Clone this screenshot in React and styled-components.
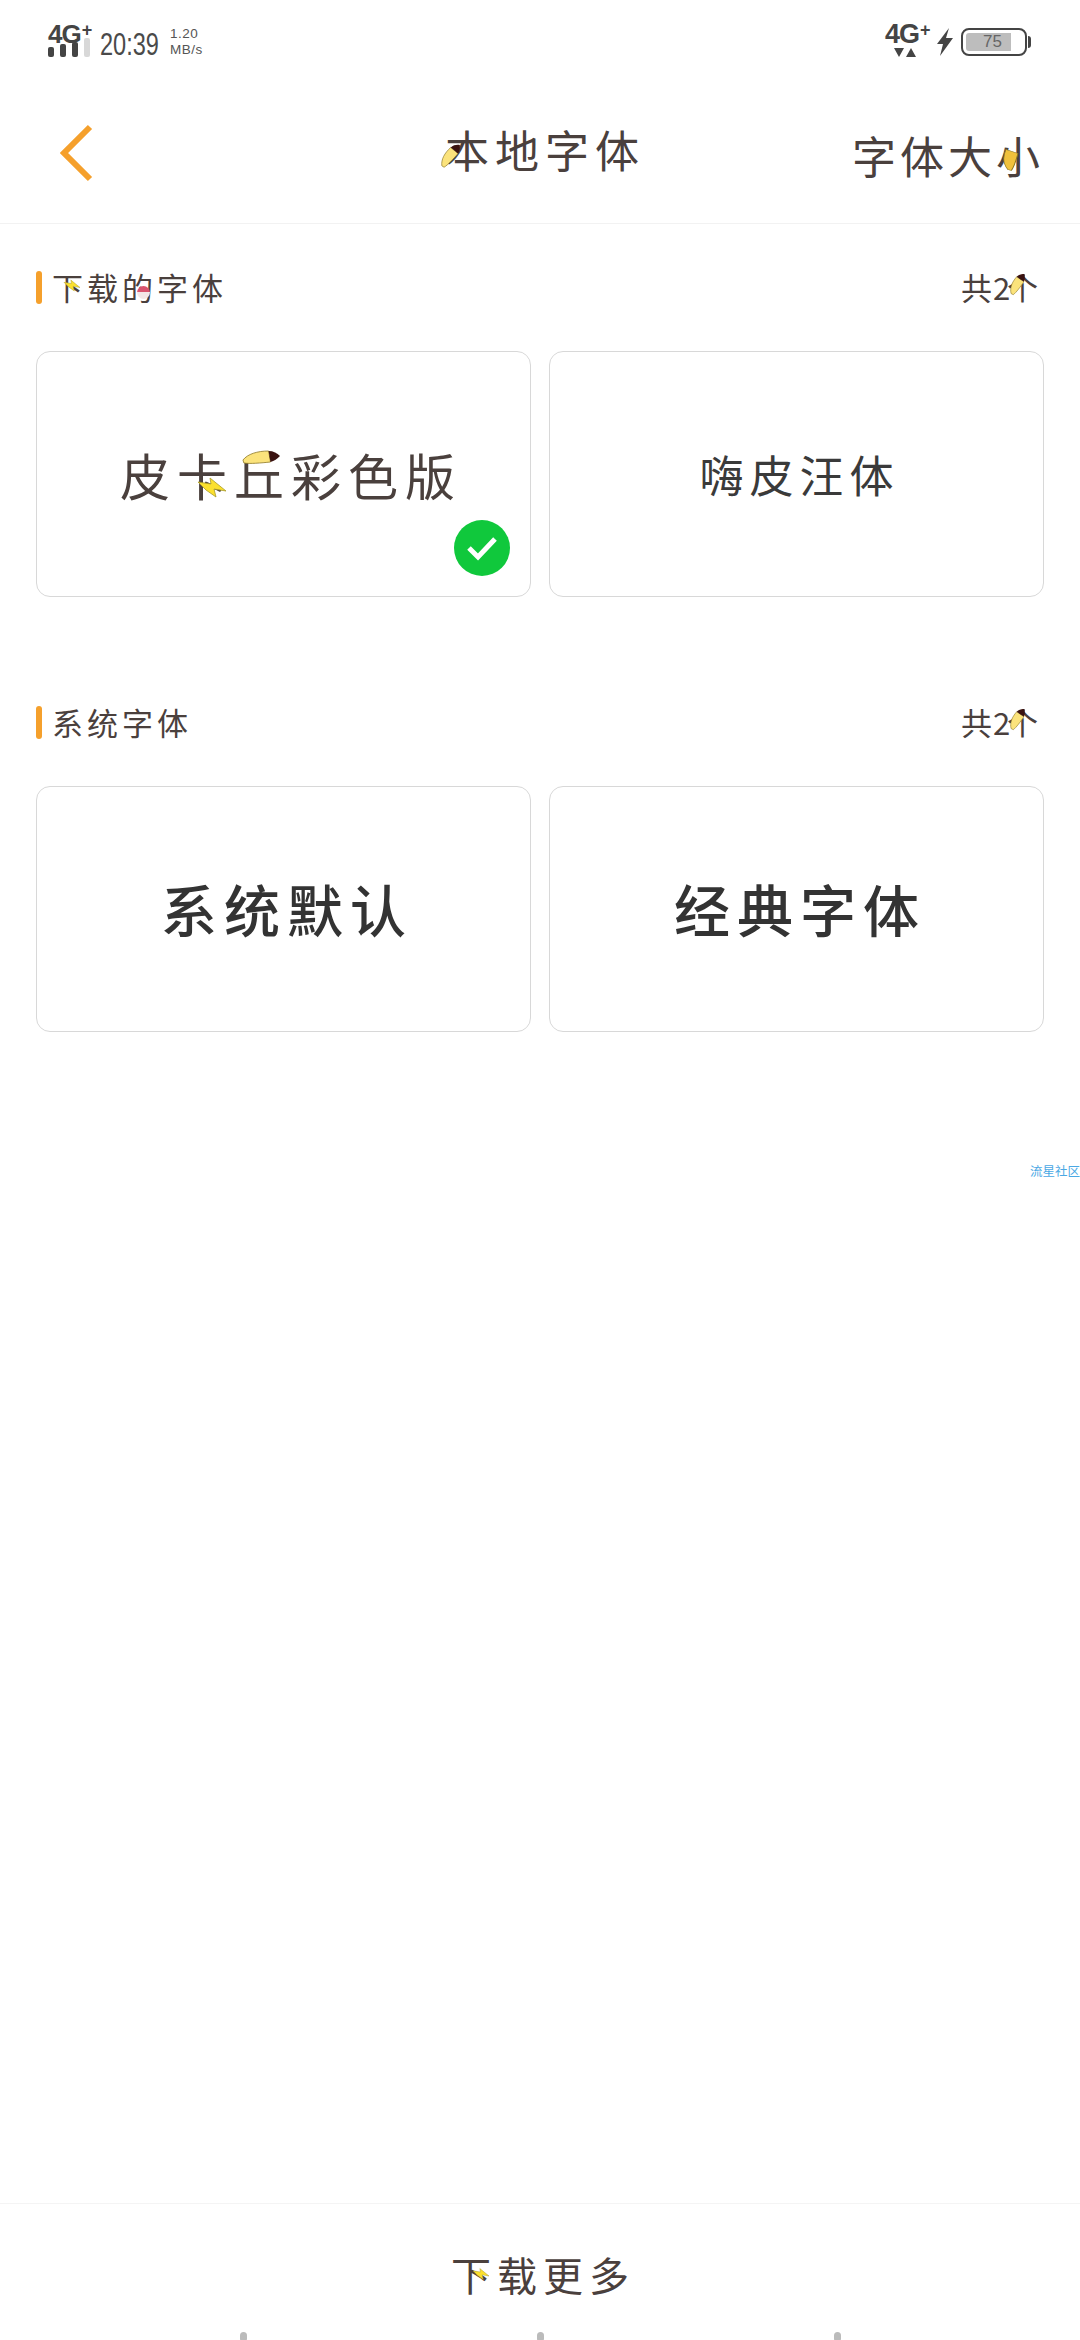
import React from 'react';
import styled, { createGlobalStyle } from 'styled-components';

const GlobalStyle = createGlobalStyle`
  * {
    box-sizing: border-box;
  }
  html, body {
    margin: 0;
    padding: 0;
    background: #fff;
  }
  body {
    font-family: "Noto Sans CJK SC", "Noto Sans", sans-serif;
  }
`;

const HAND = '#4a403d';

const Page = styled.div`
  position: relative;
  width: 1080px;
  height: 2340px;
  overflow: hidden;
  display: flex;
  flex-direction: column;
  background: #fff;
`;

/* status bar */
const StatusBar = styled.div`
  height: 80px;
  padding: 22px 53px 0 48px;
  display: flex;
  justify-content: space-between;
  align-items: flex-start;
`;

const StatusGroup = styled.div`
  display: flex;
  align-items: flex-start;
`;

const Network = styled.div`
  width: 44px;
  display: flex;
  flex-direction: column;
`;

const NetworkLabel = styled.div`
  font-family: "Liberation Sans", sans-serif;
  font-weight: 700;
  font-size: ${(p) => p.$size}px;
  line-height: 24px;
  height: 24px;
  letter-spacing: -1px;
  color: #444;
  white-space: nowrap;

  sup {
    font-size: 18px;
    line-height: 0;
    vertical-align: 7px;
    margin-left: 1px;
  }
`;

const SignalBars = styled.div`
  display: flex;
  gap: 6px;
  height: 19px;
  align-items: flex-end;
  margin-top: -8px;
`;

const SignalBar = styled.span`
  width: 6px;
  height: ${(p) => p.$h}px;
  border-radius: 2px;
  background: ${(p) => (p.$off ? '#d8d8d8' : '#444')};
`;

const Clock = styled.div`
  margin: 8px 0 0 8px;
  width: 54px;
  font-family: "Liberation Sans", sans-serif;
  font-size: 31px;
  line-height: 30px;
  color: #4a4a4a;
  transform: scaleX(0.76);
  transform-origin: left center;
  white-space: nowrap;
`;

const Speed = styled.div`
  margin: 4px 0 0 16px;
  font-family: "Liberation Sans", sans-serif;
  font-size: 13.5px;
  line-height: 15.5px;
  letter-spacing: 0.5px;
  color: #555;
  text-align: left;
`;

const Arrows = styled.svg`
  display: block;
  width: 22px;
  height: 11px;
  margin: 1px 0 0 9px;
`;

const Bolt = styled.svg`
  width: 16px;
  height: 28px;
  margin: 6px 8px 0 8px;
`;

const Battery = styled.div`
  position: relative;
  width: 66px;
  height: 28px;
  margin-top: 6px;
  padding: 3px;
  border: 2px solid #444;
  border-radius: 8px;

  &::after {
    content: '';
    position: absolute;
    right: -6px;
    top: 6px;
    width: 3px;
    height: 12px;
    border-radius: 0 3px 3px 0;
    background: #444;
  }
`;

const BatteryFill = styled.div`
  width: 45px;
  height: 100%;
  background: #bdbdbd;
  border-radius: 3px 0 0 3px;
  display: flex;
  align-items: center;
  justify-content: flex-end;
  padding-right: 9px;
  font-family: "Liberation Sans", sans-serif;
  font-size: 17px;
  color: #666;
`;

/* nav bar */
const NavBar = styled.div`
  height: 144px;
  border-bottom: 1.5px solid #f2f2f2;
  padding: 0 38px 0 60px;
  display: grid;
  grid-template-columns: 1fr auto 1fr;
  align-items: center;
`;

const BackIcon = styled.svg`
  display: block;
  width: 36px;
  height: 60px;
  margin-top: 3px;
`;

const NavTitle = styled.div`
  margin-top: -4px;
  margin-left: -18px;
`;

const NavAction = styled.div`
  justify-self: end;
  margin-top: 8px;
`;

/* hand-written style text */
const HandText = styled.div`
  display: flex;
  justify-content: center;
  font-size: ${(p) => p.$size}px;
  line-height: 1.2;
  color: ${(p) => p.$color || HAND};
  white-space: nowrap;
`;

const Glyph = styled.span`
  position: relative;
  display: inline-block;
  text-align: center;
  width: ${(p) => p.$w}px;
`;

const Deco = styled.svg`
  position: absolute;
  left: ${(p) => p.$x}px;
  top: ${(p) => p.$y}px;
  width: ${(p) => p.$w}px;
  height: ${(p) => p.$h}px;
  transform: rotate(${(p) => p.$r || 0}deg);
  overflow: visible;
`;

const Pencil = ({ x, y, w, h, r, gold }) => (
  <Deco $x={x} $y={y} $w={w} $h={h} $r={r} viewBox="0 0 40 14" preserveAspectRatio="none">
    <path
      d="M1 10C6 4 16 1 28 1L30 12C20 13 8 14 2 13Z"
      fill={gold ? '#f0c13c' : '#fbe37c'}
      stroke="#8a7420"
      strokeWidth="0.8"
    />
    {!gold && <path d="M28 1C33 1 37 3 40 6C37 9 34 11 30 12Z" fill="#3a1210" />}
  </Deco>
);

const Spark = ({ x, y, w, h }) => (
  <Deco $x={x} $y={y} $w={w} $h={h} viewBox="0 0 28 19">
    <path
      d="M0 4L13 6L12 0L28 13L16 11L18 19L8 12Z"
      fill="#fbe02e"
      stroke="#a89a2a"
      strokeWidth="0.8"
    />
  </Deco>
);

const Ball = styled.span`
  position: absolute;
  right: 5px;
  top: 18px;
  width: 13px;
  height: 13px;
  border-radius: 50%;
  background: linear-gradient(#d9536d 50%, #f3e6e6 50%);
`;

/* sections */
const Section = styled.section`
  padding: ${(p) => p.$top}px 36px 0;
`;

const SectionHead = styled.div`
  height: 34px;
  display: flex;
  justify-content: space-between;
  align-items: center;
  margin-bottom: 47px;
`;

const SectionTitle = styled.div`
  display: flex;
  align-items: center;
`;

const Marker = styled.span`
  width: 6px;
  height: 33px;
  border-radius: 3px;
  background: #f5a02c;
  margin-right: 8px;
`;

const SectionCount = styled.div`
  display: flex;
  align-items: center;
  margin-right: 6px;
`;

const CardGrid = styled.div`
  display: grid;
  grid-template-columns: 1fr 1fr;
  gap: 18px;
`;

const FontCard = styled.div`
  position: relative;
  height: 246px;
  border: 1.5px solid #d8d8d8;
  border-radius: 14px;
  background: #fff;
  padding-left: ${(p) => p.$shift || 0}px;
  display: flex;
  align-items: center;
  justify-content: center;
`;

const CheckBadge = styled.div`
  position: absolute;
  right: 20px;
  bottom: 20px;
  width: 56px;
  height: 56px;
  border-radius: 50%;
  background: #10c83c;
  display: flex;
  align-items: center;
  justify-content: center;
`;

const SystemName = styled.div`
  font-size: 56px;
  font-weight: 500;
  letter-spacing: 7px;
  line-height: 1;
  color: #333;
  margin-top: -3px;
`;

const Watermark = styled.div`
  position: absolute;
  right: 0;
  top: 1163px;
  font-size: 12.5px;
  line-height: 15px;
  color: #4aa8e4;
`;

/* bottom */
const BottomBar = styled.div`
  margin-top: auto;
  height: 137px;
  border-top: 1.5px solid #f4f4f4;
  display: flex;
  flex-direction: column;
  align-items: center;
`;

const DownloadMore = styled.div`
  margin-top: 46px;
`;

const NavDots = styled.div`
  margin-top: auto;
  width: 601px;
  height: 8px;
  display: flex;
  justify-content: space-between;
`;

const NavDot = styled.span`
  flex: none;
  width: 7px;
  height: 10px;
  border-radius: 4px;
  background: #bbb;
`;

const CountText = () => (
  <HandText $size={31}>
    <Glyph $w={33}>共</Glyph>
    <Glyph $w={14}>2</Glyph>
    <Glyph $w={31}>个<Pencil x={-2} y={10} w={24} h={11} r={-48} /></Glyph>
  </HandText>
);

const App = () => (
  <Page>
    <GlobalStyle />
    <StatusBar>
      <StatusGroup>
        <Network>
          <NetworkLabel $size={26}>4G<sup>+</sup></NetworkLabel>
          <SignalBars>
            <SignalBar $h={10} />
            <SignalBar $h={13} />
            <SignalBar $h={15} />
            <SignalBar $h={19} $off />
          </SignalBars>
        </Network>
        <Clock>20:39</Clock>
        <Speed>1.20<br />MB/s</Speed>
      </StatusGroup>
      <StatusGroup>
        <Network>
          <NetworkLabel $size={27}>4G<sup>+</sup></NetworkLabel>
          <Arrows viewBox="0 0 22 11">
            <path d="M0 1H10L5 10Z M12 10H22L17 1Z" fill="#444" />
          </Arrows>
        </Network>
        <Bolt viewBox="0 0 16 28">
          <path d="M12 0L0 16H6L3 28L16 10H9Z" fill="#444" />
        </Bolt>
        <Battery>
          <BatteryFill>75</BatteryFill>
        </Battery>
      </StatusGroup>
    </StatusBar>

    <NavBar>
      <BackIcon viewBox="0 0 36 60">
        <path d="M30 4L4 30L30 56" fill="none" stroke="#f5a02c" strokeWidth="6" />
      </BackIcon>
      <NavTitle>
        <HandText $size={44}>
          <Glyph $w={50}>本<Pencil x={-6} y={26} w={28} h={12} r={-42} /></Glyph>
          <Glyph $w={50}>地</Glyph>
          <Glyph $w={50}>字</Glyph>
          <Glyph $w={50}>体</Glyph>
        </HandText>
      </NavTitle>
      <NavAction>
        <HandText $size={44}>
          <Glyph $w={48}>字</Glyph>
          <Glyph $w={48}>体</Glyph>
          <Glyph $w={48}>大</Glyph>
          <Glyph $w={48}>小<Pencil x={3} y={20} w={26} h={16} r={-65} gold /></Glyph>
        </HandText>
      </NavAction>
    </NavBar>

    <Section $top={46}>
      <SectionHead>
        <SectionTitle>
          <Marker />
          <HandText $size={31}>
            <Glyph $w={35}>下<Spark x={14} y={12} w={16} h={11} /></Glyph>
            <Glyph $w={35}>载</Glyph>
            <Glyph $w={35}>的<Ball /></Glyph>
            <Glyph $w={35}>字</Glyph>
            <Glyph $w={35}>体</Glyph>
          </HandText>
        </SectionTitle>
        <SectionCount>
          <CountText />
        </SectionCount>
      </SectionHead>
      <CardGrid>
        <FontCard $shift={8}>
          <HandText $size={50}>
            <Glyph $w={57}>皮</Glyph>
            <Glyph $w={57}>卡<Spark x={24} y={34} w={28} h={19} /></Glyph>
            <Glyph $w={57}>丘<Pencil x={11} y={6} w={38} h={14} /></Glyph>
            <Glyph $w={57}>彩</Glyph>
            <Glyph $w={57}>色</Glyph>
            <Glyph $w={57}>版</Glyph>
          </HandText>
          <CheckBadge>
            <svg width="32" height="26" viewBox="0 0 32 26">
              <path d="M3 13L12 22L29 4" fill="none" stroke="#fff" strokeWidth="5" />
            </svg>
          </CheckBadge>
        </FontCard>
        <FontCard>
          <HandText $size={44} $color="#3a3a3a">
            <Glyph $w={50}>嗨</Glyph>
            <Glyph $w={50}>皮</Glyph>
            <Glyph $w={50}>汪</Glyph>
            <Glyph $w={50}>体</Glyph>
          </HandText>
        </FontCard>
      </CardGrid>
    </Section>

    <Section $top={108}>
      <SectionHead>
        <SectionTitle>
          <Marker />
          <HandText $size={31}>
            <Glyph $w={35}>系</Glyph>
            <Glyph $w={35}>统</Glyph>
            <Glyph $w={35}>字</Glyph>
            <Glyph $w={35}>体</Glyph>
          </HandText>
        </SectionTitle>
        <SectionCount>
          <CountText />
        </SectionCount>
      </SectionHead>
      <CardGrid>
        <FontCard $shift={7}>
          <SystemName>系统默认</SystemName>
        </FontCard>
        <FontCard $shift={7}>
          <SystemName>经典字体</SystemName>
        </FontCard>
      </CardGrid>
    </Section>

    <Watermark>流星社区</Watermark>

    <BottomBar>
      <DownloadMore>
        <HandText $size={40}>
          <Glyph $w={46}>下<Spark x={25} y={18} w={16} h={12} /></Glyph>
          <Glyph $w={46}>载</Glyph>
          <Glyph $w={46}>更</Glyph>
          <Glyph $w={46}>多</Glyph>
        </HandText>
      </DownloadMore>
      <NavDots>
        <NavDot />
        <NavDot />
        <NavDot />
      </NavDots>
    </BottomBar>
  </Page>
);

export default App;
